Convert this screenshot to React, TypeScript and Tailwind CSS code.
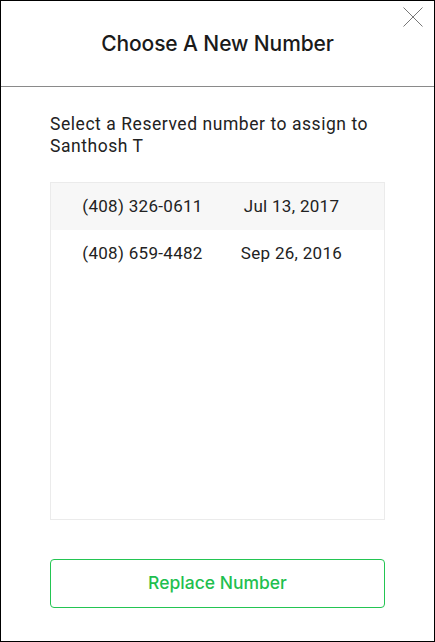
import React from "react";

export default function App() {
  const rows = [
    { phone: "(408) 326-0611", date: "Jul 13, 2017", active: true },
    { phone: "(408) 659-4482", date: "Sep 26, 2016", active: false },
  ];
  return (
    <div className="w-[435px] h-[642px] border border-black bg-white flex flex-col relative" style={{ fontFamily: "Roboto, 'Liberation Sans', sans-serif" }}>
      <div className="h-[86px] border-b border-[#8a8a8a] flex items-center justify-center shrink-0">
        <h1 className="text-[21px] text-[#1a1a1a] font-medium tracking-[-0.1px] mt-[1px]" style={{ fontFamily: "Inter, 'Liberation Sans', sans-serif" }}>
          Choose A New Number
        </h1>
      </div>
      <button className="absolute right-[11px] top-[6px] w-[20px] h-[20px]" aria-label="close">
        <svg width="20" height="20" viewBox="0 0 20 20">
          <path d="M0.5 0.5 L19.5 19.5 M19.5 0.5 L0.5 19.5" stroke="#777" strokeWidth="1" />
        </svg>
      </button>
      <div className="px-[49px] pt-[26px] flex flex-col">
        <p className="text-[17.5px] leading-[22px] tracking-[0.55px] text-[#222]">
          Select a Reserved number to assign to
          <br />
          Santhosh T
        </p>
        <div className="mt-[25px] h-[338px] border border-[#ebebeb]">
          {rows.map((r) => (
            <div key={r.phone} className={`h-[47px] flex items-center text-[17px] tracking-[0.3px] text-[#222] ${r.active ? "bg-[#f7f7f7]" : ""}`}>
              <span className="w-[183px] text-center">{r.phone}</span>
              <span className="w-[115px] text-center">{r.date}</span>
            </div>
          ))}
        </div>
        <button className="mt-[39px] h-[49px] border border-[#23c552] rounded-[4px] text-[#1fbf4f] text-[17.5px] font-medium" style={{ fontFamily: "Inter, 'Liberation Sans', sans-serif" }}>
          Replace Number
        </button>
      </div>
    </div>
  );
}
